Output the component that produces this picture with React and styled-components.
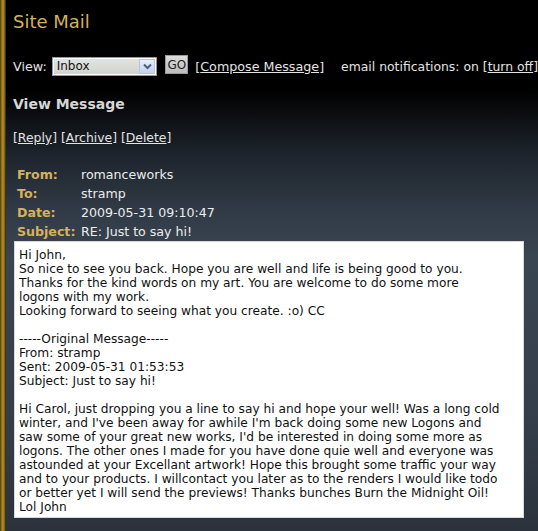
import React from 'react';
import styled, { createGlobalStyle } from 'styled-components';

const GlobalStyle = createGlobalStyle`
  html, body {
    margin: 0;
    padding: 0;
    background: #000;
  }
  body {
    font-family: "DejaVu Sans", Verdana, sans-serif;
  }
`;

const Page = styled.div`
  display: flex;
  width: 538px;
  height: 531px;
  overflow: hidden;
  background: linear-gradient(
    to bottom,
    #000 0px,
    #000 90px,
    #1c222a 150px,
    #323c48 215px,
    #3a4552 260px,
    #343e4a 420px,
    #2b323c 531px
  );
`;

const GoldBar = styled.div`
  flex: 0 0 6px;
  background: linear-gradient(
    to right,
    #4a390c 0px,
    #a2801f 2px,
    #b48f2c 3px,
    #6e5515 5px,
    #1d1708 6px
  );
`;

const Main = styled.div`
  flex: 1;
  min-width: 0;
  padding-left: 7px;
  color: #e4e4e4;
  font-size: 12.4px;
`;

const Title = styled.h1`
  margin: 0;
  padding-top: 11px;
  font-size: 18px;
  line-height: 22px;
  font-weight: normal;
  color: #d4b15c;
`;

const Toolbar = styled.div`
  display: flex;
  align-items: center;
  height: 20px;
  margin-top: 23px;
  white-space: nowrap;
  font-size: 12.7px;
`;

const Label = styled.span`
  margin-right: ${p => p.$gap || 0}px;
`;

const Notice = styled.span`
  margin-left: 17px;
  font-size: 12.4px;
`;

const Select = styled.div`
  display: flex;
  width: 106px;
  height: 19px;
  box-sizing: border-box;
  border: 1px solid #7f9db9;
  background: #fff;
  padding: 1px;
`;

const SelectValue = styled.div`
  flex: 1;
  background: linear-gradient(to bottom, #e2e2de, #d4d4cf);
  color: #111;
  font-size: 12px;
  line-height: 15px;
  padding-left: 3px;
`;

const SelectArrow = styled.div`
  width: 16px;
  display: flex;
  align-items: center;
  justify-content: center;
  background: linear-gradient(to bottom, #e9eef8, #c3d1ec);
  border: 1px solid #b7c5e0;
  box-sizing: border-box;
`;

const GoButton = styled.button`
  margin-left: 8px;
  width: 23px;
  height: 19px;
  margin-top: -3px;
  padding: 0;
  border: 1px solid #9a9a9a;
  background: linear-gradient(to bottom, #dcdcdc, #bdbdbd);
  color: #222;
  font-family: "DejaVu Sans", Verdana, sans-serif;
  font-size: 12px;
  line-height: 16px;
`;

const Bracket = styled.span`
  color: #e4e4e4;
  margin-left: ${p => p.$left || 0}px;
`;

const Link = styled.a`
  color: #e4e4e4;
  text-decoration: underline;
  cursor: pointer;
`;

const Heading = styled.h2`
  margin: 19px 0 0;
  font-size: 14px;
  line-height: 18px;
  font-weight: bold;
  color: #d6d6d6;
`;

const Actions = styled.div`
  margin-top: 17px;
  line-height: 16px;
`;

const Meta = styled.div`
  display: grid;
  grid-template-columns: 64px 1fr;
  margin-top: 19px;
  padding-left: 4px;
  font-size: 12.6px;
`;

const MetaLabel = styled.div`
  height: 19px;
  line-height: 19px;
  font-weight: bold;
  color: #d7b25c;
`;

const MetaValue = styled.div`
  height: 19px;
  line-height: 19px;
  color: #ececec;
`;

const MessageBox = styled.div`
  margin: 0 0 0 1px;
  width: 510px;
  height: 277px;
  box-sizing: border-box;
  background: #fff;
  border: 1px solid #d8d8d8;
  padding: 6px 4px 3px;
  color: #111;
  font-size: 12.2px;
  line-height: 14px;
  white-space: pre;
  overflow: hidden;
`;

const Chevron = () => (
  <svg width="9" height="7" viewBox="0 0 9 7">
    <path d="M1 1.5 L4.5 5 L8 1.5" fill="none" stroke="#4d6185" strokeWidth="2" />
  </svg>
);

const meta = [
  ['From:', 'romanceworks'],
  ['To:', 'stramp'],
  ['Date:', '2009-05-31 09:10:47'],
  ['Subject:', 'RE: Just to say hi!'],
];

const body = [
  'Hi John,',
  'So nice to see you back. Hope you are well and life is being good to you.',
  'Thanks for the kind words on my art. You are welcome to do some more',
  'logons with my work.',
  'Looking forward to seeing what you create. :o) CC',
  '',
  '-----Original Message-----',
  'From: stramp',
  'Sent: 2009-05-31 01:53:53',
  'Subject: Just to say hi!',
  '',
  'Hi Carol, just dropping you a line to say hi and hope your well! Was a long cold',
  "winter, and I've been away for awhile I'm back doing some new Logons and",
  "saw some of your great new works, I'd be interested in doing some more as",
  'logons. The other ones I made for you have done quie well and everyone was',
  'astounded at your Excellant artwork! Hope this brought some traffic your way',
  'and to your products. I willcontact you later as to the renders I would like todo',
  'or better yet I will send the previews! Thanks bunches Burn the Midnight Oil!',
  'Lol John',
].join('\n');

const App = () => (
  <>
    <GlobalStyle />
    <Page>
      <GoldBar />
      <Main>
        <Title>Site Mail</Title>
        <Toolbar>
          <Label $gap={5}>View:</Label>
          <Select>
            <SelectValue>Inbox</SelectValue>
            <SelectArrow>
              <Chevron />
            </SelectArrow>
          </Select>
          <GoButton>GO</GoButton>
          <Bracket $left={7}>[</Bracket>
          <Link>Compose Message</Link>
          <Bracket>]</Bracket>
          <Notice>
            email notifications: on [<Link>turn off</Link>]
          </Notice>
        </Toolbar>
        <Heading>View Message</Heading>
        <Actions>
          [<Link>Reply</Link>] [<Link>Archive</Link>] [<Link>Delete</Link>]
        </Actions>
        <Meta>
          {meta.map(([k, v]) => (
            <React.Fragment key={k}>
              <MetaLabel>{k}</MetaLabel>
              <MetaValue>{v}</MetaValue>
            </React.Fragment>
          ))}
        </Meta>
        <MessageBox>{body}</MessageBox>
      </Main>
    </Page>
  </>
);

export default App;
